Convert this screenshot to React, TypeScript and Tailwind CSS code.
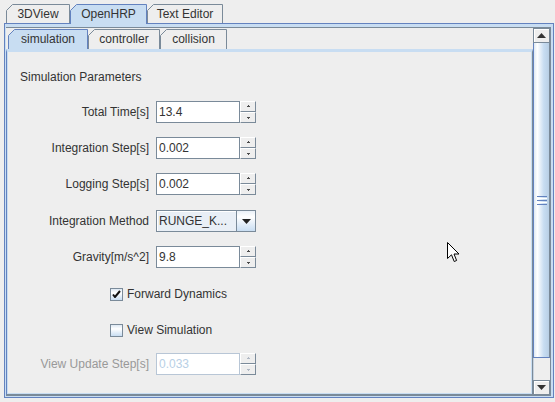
import type { ReactNode } from "react";

type TabProps = {
  label: string;
  w: number;
  h: number;
  selected?: boolean;
  className: string;
};

// Metal-style tab with the clipped top-left corner
const Tab = ({ label, w, h, selected, className }: TabProps) => {
  const d = `M0.5 ${h} V6.5 L6.5 0.5 H${w - 0.5} V${h}`;
  return (
    <div
      className={`relative flex shrink-0 items-start justify-center ${className} ${
        selected ? "z-10" : ""
      }`}
    >
      <svg className="absolute left-0 top-0" width={w} height={h} viewBox={`0 0 ${w} ${h}`}>
        <path d={`${d} Z`} fill={selected ? "#c8ddf2" : "#eeeeee"} />
        <path d={d} fill="none" stroke={selected ? "#6382bf" : "#7a8a99"} />
      </svg>
      <span className="relative mt-[3px] leading-[14px]">{label}</span>
    </div>
  );
};

const TinyArrow = ({ up, color }: { up?: boolean; color: string }) => (
  <svg width="5" height="3" viewBox="0 0 5 3" shapeRendering="crispEdges">
    {up ? (
      <>
        <rect x="2" y="0" width="1" height="1" fill={color} />
        <rect x="1" y="1" width="3" height="1" fill={color} />
      </>
    ) : (
      <>
        <rect x="1" y="1" width="3" height="1" fill={color} />
        <rect x="2" y="2" width="1" height="1" fill={color} />
      </>
    )}
  </svg>
);

const SpinButton = ({ up, disabled }: { up?: boolean; disabled?: boolean }) => (
  <div className="flex h-[11px] w-[16px] items-center justify-center border border-t-white border-l-white border-r-[#7a8a99] border-b-[#7a8a99] bg-[#eeeeee]">
    <TinyArrow up={up} color={disabled ? "#b0b8c4" : "#4a4a4a"} />
  </div>
);

const Spinner = ({ value, disabled }: { value: string; disabled?: boolean }) => (
  <div className="flex">
    <div
      className={`flex h-[22px] w-[84px] items-center border bg-white pl-[2px] ${
        disabled ? "border-[#b8c6d6] text-[#b8cfe5]" : "border-[#7a8a99] text-[#333333]"
      }`}
    >
      {value}
    </div>
    <div className="flex flex-col">
      <SpinButton up disabled={disabled} />
      <SpinButton disabled={disabled} />
    </div>
  </div>
);

const CheckBox = ({ checked }: { checked?: boolean }) => (
  <div className="flex h-[13px] w-[13px] items-center justify-center border border-[#7a8a99] bg-[linear-gradient(180deg,#dde8f3_0%,#ffffff_35%,#c8ddf2_100%)]">
    {checked && (
      <svg width="9" height="8" viewBox="0 0 9 8">
        <path d="M1 4.5 L3 7 L8 1" fill="none" stroke="#111" strokeWidth="2" />
      </svg>
    )}
  </div>
);

const Row = ({ label, disabled, children, className }: {
  label: string;
  disabled?: boolean;
  children: ReactNode;
  className: string;
}) => (
  <div className={`flex items-center ${className}`}>
    <div className={`w-[141px] text-right ${disabled ? "text-[#999999]" : ""}`}>{label}</div>
    <div className="ml-[7px]">{children}</div>
  </div>
);

const ScrollButton = ({ up }: { up?: boolean }) => (
  <div className="flex h-[15px] items-center justify-center border border-[#7a8a99] bg-[#eeeeee] shadow-[inset_1px_1px_0_#ffffff]">
    <svg width="9" height="5" viewBox="0 0 9 5">
      <path d={up ? "M4.5 0 L9 5 H0 Z" : "M0 0 H9 L4.5 5 Z"} fill="#333333" />
    </svg>
  </div>
);

export default function App() {
  return (
    <div className="relative h-[402px] w-[555px] overflow-hidden bg-[#eeeeee] font-['Liberation_Sans',Arial,sans-serif] text-[12px] text-[#333333]">
      {/* outer tabs */}
      <div className="flex h-[23px] items-start pl-[6px] pt-[4px]">
        <Tab label="3DView" w={64} h={19} className="h-[19px] w-[64px]" />
        <Tab label="OpenHRP" w={77} h={20} selected className="h-[20px] w-[77px]" />
        <Tab label="Text Editor" w={76} h={19} className="h-[19px] w-[76px]" />
      </div>

      <div className="ml-[4px] h-[375px] w-[550px] border border-[#6382bf] bg-[#c8ddf2] pb-[1px] pl-[1px] pr-[2px] pt-[3px]">
        <div className="flex h-full border-b border-r border-t border-[#7a8a99] bg-[#eeeeee]">
          {/* viewport with inner tabbed pane */}
          <div className="flex w-[527px] flex-col">
            <div className="flex h-[21px] items-start pl-[2px] pt-[1px]">
              <Tab label="simulation" w={80} h={20} selected className="h-[20px] w-[80px]" />
              <Tab label="controller" w={72} h={20} className="h-[20px] w-[72px]" />
              <Tab label="collision" w={67} h={20} className="h-[20px] w-[67px]" />
            </div>
            <div className="flex-1 border-b border-l border-r border-t-[3px] border-b-[#7a8a99] border-l-[#6382bf] border-r-[#7a8a99] border-t-[#c8ddf2]">
              <div className="h-full border-b border-l border-r border-[#c8ddf2] leading-[14px]">
                <div className="ml-[12px] pt-[18px]">Simulation Parameters</div>

                <Row label="Total Time[s]" className="mt-[17px]">
                  <Spinner value="13.4" />
                </Row>
                <Row label="Integration Step[s]" className="mt-[14px]">
                  <Spinner value="0.002" />
                </Row>
                <Row label="Logging Step[s]" className="mt-[14px]">
                  <Spinner value="0.002" />
                </Row>
                <Row label="Integration Method" className="mt-[15px]">
                  <div className="flex h-[22px] w-[100px] border border-[#7a8a99]">
                    <div className="flex flex-1 items-center bg-[#e9eff6] pl-[2px] shadow-[inset_1px_1px_0_#ffffff]">
                      RUNGE_K...
                    </div>
                    <div className="flex w-[19px] items-center justify-center border-l border-[#7a8a99] bg-[linear-gradient(180deg,#eaf1f8_0%,#ffffff_30%,#c8ddf2_100%)]">
                      <svg width="9" height="5" viewBox="0 0 9 5">
                        <path d="M0 0 H9 L4.5 5 Z" fill="#222222" />
                      </svg>
                    </div>
                  </div>
                </Row>
                <Row label="Gravity[m/s^2]" className="mt-[14px]">
                  <Spinner value="9.8" />
                </Row>

                <div className="mt-[15px] flex h-[22px] items-center gap-[4px] pl-[102px]">
                  <CheckBox checked />
                  <span>Forward Dynamics</span>
                </div>
                <div className="mt-[14px] flex h-[22px] items-center gap-[4px] pl-[102px]">
                  <CheckBox />
                  <span>View Simulation</span>
                </div>

                <Row label="View Update Step[s]" disabled className="mt-[12px]">
                  <Spinner value="0.033" disabled />
                </Row>
              </div>
            </div>
          </div>

          {/* vertical scrollbar */}
          <div className="flex w-[17px] flex-col">
            <ScrollButton up />
            <div className="flex flex-1 flex-col">
              <div className="flex h-[315px] flex-col items-center justify-center gap-[1px] border-b border-l border-r border-b-[#6382bf] border-l-[#6382bf] border-r-[#7a8a99] bg-[linear-gradient(90deg,#dde8f3_0%,#ffffff_22%,#c8ddf2_65%,#b8cfe5_100%)]">
                <div className="h-[1px] w-[10px] bg-[#6382bf]" />
                <div className="h-[1px] w-[10px] bg-[#ffffff]" />
                <div className="h-[1px] w-[10px] bg-[#6382bf]" />
                <div className="h-[1px] w-[10px] bg-[#ffffff]" />
                <div className="h-[1px] w-[10px] bg-[#6382bf]" />
              </div>
              <div className="flex-1 border-l border-[#c8d3df] bg-[#eeeeee]" />
            </div>
            <ScrollButton />
          </div>
        </div>
      </div>

      {/* mouse pointer */}
      <svg className="absolute left-[447px] top-[242px]" width="13" height="21" viewBox="0 0 13 21">
        <path
          d="M0.5 0.5 V16.5 L4.5 12.8 L7.2 19.5 L9.6 18.5 L7 12 H12 Z"
          fill="#ffffff"
          stroke="#000000"
          strokeLinejoin="miter"
        />
      </svg>
    </div>
  );
}
